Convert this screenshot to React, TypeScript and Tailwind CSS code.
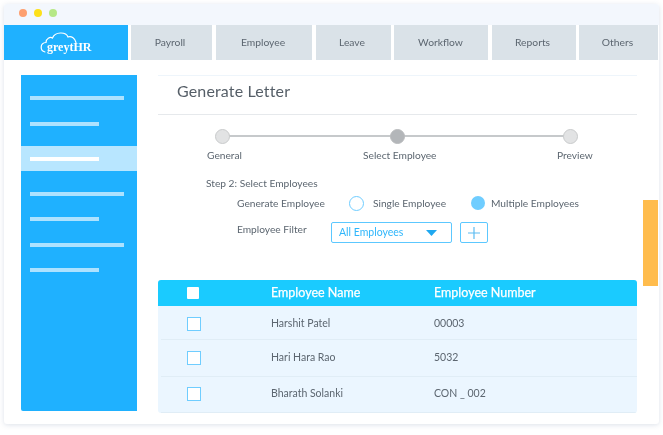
import React from 'react';

const tabs = [
  { label: 'Payroll', box: 'w-[81px] ml-[3px] pr-[3px]' },
  { label: 'Employee', box: 'w-[96px] ml-[4px] pr-[2px]' },
  { label: 'Leave', box: 'w-[75px] ml-[4px] pr-[3px]' },
  { label: 'Workflow', box: 'w-[94px] ml-[3px] pr-[1px]' },
  { label: 'Reports', box: 'w-[84px] ml-[4px] pr-[3px]' },
  { label: 'Others', box: 'w-[79px] ml-[3px] pr-[2px]' },
];

const rows = [
  { name: 'Harshit Patel', number: '00003', height: 'h-[34px] pt-[2px]' },
  { name: 'Hari Hara Rao', number: '5032', height: 'h-[37px]' },
  { name: 'Bharath Solanki', number: 'CON _ 002', height: 'h-[36px] pb-[1px]' },
];

const SideBar = ({ short, active }: { short?: boolean; active?: boolean }) => (
  <div className={`h-1 ${short ? 'w-[69px]' : 'w-[94px]'} ${active ? 'bg-white' : 'bg-[#ade2ff]'}`} />
);

const Logo = () => (
  <div className="relative w-[52px] h-[24px]">
    <svg className="absolute left-0 top-0" width="52" height="24" viewBox="0 0 52 24" fill="none" stroke="white" strokeWidth="1.2" strokeLinecap="round">
      <path d="M5 21 C0 20 -0.5 12 6 11.5 C6 7.5 10 5.5 12.5 7 C15 0.5 26 0.5 28 6 C31 4.5 35 7 36 11.5" />
    </svg>
    <span className="absolute left-[7px] top-[7px] font-['Liberation_Serif',serif] font-bold text-[12px] leading-[18px] text-white whitespace-nowrap">greytHR</span>
  </div>
);

export default function App() {
  return (
    <div className="w-[663px] h-[435px] bg-white pt-[4px] pl-[4px] font-['Lato',sans-serif] overflow-hidden">
      <div className="w-[655px] h-[420px] bg-white rounded-[3px] shadow-[0_1px_5px_rgba(120,140,170,0.25)] flex flex-col blur-[0.4px]">
        {/* title bar */}
        <div className="h-[21px] bg-[#f3f7fd] rounded-t-[3px] flex items-center gap-[7px] pl-[15px] pb-[3px] shrink-0">
          <span className="w-2 h-2 rounded-full bg-[#fd9f6f]" />
          <span className="w-2 h-2 rounded-full bg-[#fde01a]" />
          <span className="w-2 h-2 rounded-full bg-[#b6e886]" />
        </div>

        {/* nav */}
        <div className="h-[35px] flex shrink-0">
          <div className="w-[124px] bg-[#1fb1ff] flex items-center justify-center">
            <Logo />
          </div>
          {tabs.map(tab => (
            <div key={tab.label} className={`${tab.box} bg-[#dae2e8] flex items-center justify-center text-[10.3px] text-[#5c6670]`}>
              {tab.label}
            </div>
          ))}
        </div>

        <div className="flex pt-[15px] pl-[17px]">
          {/* sidebar */}
          <div className="w-[116px] h-[336px] bg-[#1fb1ff] rounded-bl-[2px] flex flex-col pt-[21px] shrink-0">
            <div className="pl-[9px]"><SideBar /></div>
            <div className="pl-[9px] mt-[22px]"><SideBar short /></div>
            <div className="h-[25px] bg-[#b8e6ff] pl-[9px] mt-[20px] flex items-center"><SideBar short active /></div>
            <div className="pl-[9px] mt-[21px]"><SideBar /></div>
            <div className="pl-[9px] mt-[21px]"><SideBar short /></div>
            <div className="pl-[9px] mt-[22px]"><SideBar /></div>
            <div className="pl-[9px] mt-[21px]"><SideBar short /></div>
          </div>

          {/* content */}
          <div className="w-[479px] ml-[21px] flex flex-col shrink-0">
            <div className="h-[40px] border-t border-b border-t-[#eef5fb] border-b-[#e6e9ec] pl-[19px] pb-[8px] flex items-center text-[16px] text-[#555e67] tracking-[0.15px]">
              Generate Letter
            </div>

            {/* stepper */}
            <div className="relative mt-[14px] text-[10.2px] text-[#5c6670] leading-[13px]">
              <div className="absolute left-[64px] w-[348px] top-[6px] h-[2px] bg-[#c6c9cb]" />
              <div className="relative flex pl-[57px]">
                <span className="w-[15px] h-[15px] rounded-full bg-[#e2e3e4] border border-[#c9cbcc]" />
                <span className="w-[15px] h-[15px] rounded-full bg-[#b3b6b9] border border-[#b9bbbd] ml-[160px]" />
                <span className="w-[15px] h-[15px] rounded-full bg-[#e2e3e4] border border-[#c9cbcc] ml-[158px]" />
              </div>
              <div className="flex pl-[49px] mt-[5px]">
                <span className="w-[156px]">General</span>
                <span className="w-[194px]">Select Employee</span>
                <span>Preview</span>
              </div>
            </div>

            {/* form */}
            <div className="pl-[48px] mt-[15px] text-[10.2px] text-[#5c6670] leading-[13px]">
              <div>Step 2: Select Employees</div>
              <div className="flex items-center pl-[31px] mt-[6px] h-[14px]">
                <span className="w-[112px]">Generate Employee</span>
                <span className="w-[15px] h-[15px] rounded-full bg-white border border-[#6fcdff]" />
                <span className="ml-[9px] w-[98px]">Single Employee</span>
                <span className="w-[14px] h-[14px] rounded-full bg-[#6fcdff]" />
                <span className="ml-[6px]">Multiple Employees</span>
              </div>
              <div className="flex items-start pl-[31px] mt-[12px]">
                <span className="w-[94px] mt-[1px]">Employee Filter</span>
                <div className="w-[121px] h-[21px] border border-[#5cc8ff] rounded-[2px] flex items-center justify-between pl-[7px] pr-[14px] text-[10.5px] text-[#2fb6fb]">
                  <span>All Employees</span>
                  <svg width="11" height="6" viewBox="0 0 11 6"><path d="M0 0H11L5.5 6Z" fill="#1fa8f0" /></svg>
                </div>
                <div className="w-[28px] h-[21px] ml-[8px] border border-[#5cc8ff] rounded-[2px] flex items-center justify-center">
                  <svg width="12" height="12" viewBox="0 0 12 12" stroke="#5cbcf2" strokeWidth="1.2"><path d="M6 0V12M0 6H12" /></svg>
                </div>
              </div>
            </div>

            {/* table */}
            <div className="mt-[37px] rounded-[3px] overflow-hidden bg-[#ebf6ff]">
              <div className="h-[26px] bg-[#1acbff] flex items-center text-[12.5px] text-white [-webkit-text-stroke:0.25px_white]">
                <div className="w-[113px] pl-[29px]">
                  <div className="w-[12px] h-[12px] bg-white rounded-[1px]" />
                </div>
                <div className="w-[163px] pt-[1px]">Employee Name</div>
                <div className="pt-[1px]">Employee Number</div>
              </div>
              {rows.map(row => (
                <div key={row.name} className={`${row.height} flex items-center text-[10.5px] text-[#5c6670] border-b border-[#e0edf6] ml-[3px]`}>
                  <div className="w-[110px] pl-[26px]">
                    <div className="w-[14px] h-[14px] bg-white border border-[#6fcdff]" />
                  </div>
                  <div className="w-[163px]">{row.name}</div>
                  <div>{row.number}</div>
                </div>
              ))}
            </div>
          </div>

          {/* orange scroll marker */}
          <div className="w-[15px] h-[86px] bg-[#ffbc4d] ml-[6px] mt-[125px] shrink-0" />
        </div>
      </div>
    </div>
  );
}
